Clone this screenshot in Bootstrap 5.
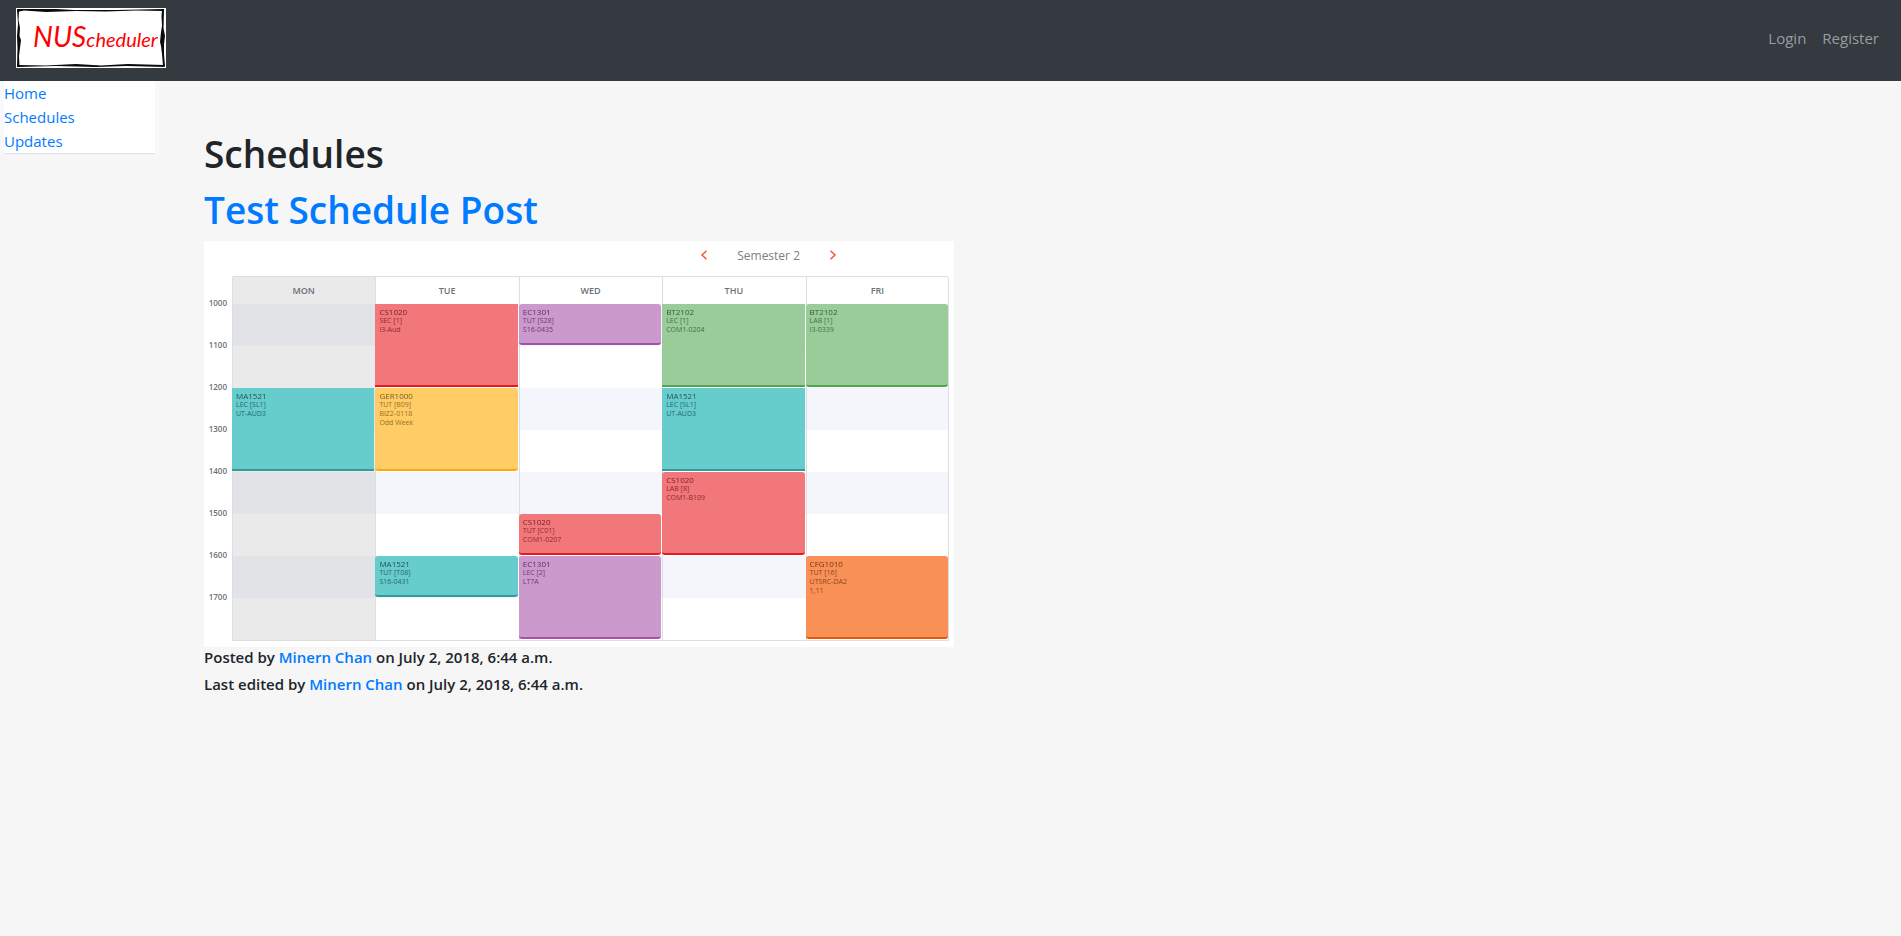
<!DOCTYPE html>
<html lang="en">
<head>
<meta charset="utf-8">
<meta name="viewport" content="width=device-width, initial-scale=1">
<title>NUScheduler</title>
<link href="https://cdn.jsdelivr.net/npm/bootstrap@5.3.0/dist/css/bootstrap.min.css" rel="stylesheet">
<style>
  body { font-family: "Open Sans", "Noto Sans", sans-serif; font-size: 15px; line-height: 24px; background: #f6f6f6; color: #212529; }
  a { color: #007bff; text-decoration: none; }
  a:hover { text-decoration: underline; }
  .site-nav { background: #343a40; padding: 8px 14px 8px 16px; min-height: 81px; align-items: flex-start; }
  .site-nav .navbar-brand { padding: 0; margin: 0; line-height: 0; }
  .site-nav .nav-link { color: #999c9f; padding: 18px 8px 8px; line-height: 24px; }
  .side-wrap { width: 159px; padding: 0 4px; background: #f8f9fa; }
  .side-menu { background: #fff; border-bottom: 1px solid #dee2e6; }
  .page-body { padding: 49px 16px 24px 45px; }
  .page-title { font-size: 37px; line-height: 48px; font-weight: 600; margin: 0 0 8px; }
  .page-title.linked { margin-bottom: 7px; }
  .byline { font-size: 15px; line-height: 19px; font-weight: 600; margin: 0 0 8px; }

  .planner { max-width: 750px; background: #fff; padding: 0 5px 6px 0; margin-bottom: 1px; color: #69707a; }
  .semester { height: 35px; padding: 3px 111px 0 0; font-size: 12px; color: #808080; gap: 28px; }
  .semester button { border: 0; background: none; padding: 0; width: 10px; height: 21px; line-height: 0; }
  .week { display: grid; grid-template-columns: 28px repeat(5, minmax(0, 1fr)); grid-template-rows: 28px repeat(8, 42px) 1px; }
  .day-bg { grid-row: 1 / 11; border: solid #dcdee2; border-width: 1px 0 1px 1px;
    background: linear-gradient(#fff, #fff) top / 100% 27px no-repeat,
      repeating-linear-gradient(#f5f6fb 0 42px, #fff 42px 84px) 0 27px; }
  .day-bg.today { background: linear-gradient(#eaeaea, #eaeaea) top / 100% 27px no-repeat,
      repeating-linear-gradient(#e2e3e7 0 42px, #eaeaea 42px 84px) 0 27px; border-top-left-radius: 2px; }
  .day-bg.last { border-right-width: 1px; border-top-right-radius: 2px; }
  .day-name { grid-row: 1; font-size: 9px; font-weight: 600; line-height: 30px; text-align: center; }
  .hour { grid-column: 1; font-size: 8px; font-weight: 600; line-height: 10px; text-align: right; padding-right: 5px; margin-top: -6px; }
  .lesson { margin: 0 1px 1px 0; border-bottom: 2px solid; padding: 3px 4px; font-size: 7px; line-height: 9px; overflow: hidden; }
  .lesson b { display: block; font-size: 8px; font-weight: 400; filter: brightness(.8); }
  .soft { border-radius: 3px; }
  .red { background: #f2777a; border-color: #e8191d; color: #8f2a30; }
  .teal { background: #66cccc; border-color: #339999; color: #29696c; }
  .gold { background: #ffcc66; border-color: #ffa80d; color: #98712a; }
  .plum { background: #cc99cc; border-color: #a94fa9; color: #6f3c70; }
  .leaf { background: #99cc99; border-color: #51a651; color: #42723f; }
  .rust { background: #f99157; border-color: #e25608; color: #8c481d; }
  .d1 { grid-column: 2; } .d2 { grid-column: 3; } .d3 { grid-column: 4; } .d4 { grid-column: 5; } .d5 { grid-column: 6; }
  .h10 { grid-row-start: 2; } .h11 { grid-row-start: 3; } .h12 { grid-row-start: 4; } .h13 { grid-row-start: 5; }
  .h14 { grid-row-start: 6; } .h15 { grid-row-start: 7; } .h16 { grid-row-start: 8; } .h17 { grid-row-start: 9; }
  .long { grid-row-end: span 2; }
</style>
</head>
<body>
<nav class="navbar navbar-expand site-nav">
  <a class="navbar-brand" href="#">
    <svg width="150" height="60" viewBox="0 0 150 60" role="img" aria-label="NUScheduler">
      <rect width="150" height="60" fill="#fff"/>
      <g fill="#0a0a0a">
        <path d="M1 1L40 1 58 2 100 2 148 1 148 3 120 2.500 90 3.500 60 3 30 4 8 2.500 1 4Z"/>
        <path d="M1 57L30 57.500 60 56 85 57.500 112 56 148 57 149 59 110 58 80 59 40 58 1 59Z"/>
        <path d="M1 1L3 3 2.500 12 4 20 3.500 28 5 32 4 40 3 48 3.500 59 1 59 1.500 40 1 28 2 16Z"/>
        <path d="M146 2L148 2 147.500 20 149 28 148 36 148 46 149 58 147 58 146 46 145 38 144 34 145 24 146 18 145.500 8Z"/>
      </g>
      <text x="17" y="39" fill="#f00" font-family="Lato, sans-serif" font-style="italic"><tspan font-size="28">NUS</tspan><tspan font-size="20">cheduler</tspan></text>
    </svg>
  </a>
  <ul class="navbar-nav ms-auto">
    <li class="nav-item"><a class="nav-link" href="#">Login</a></li>
    <li class="nav-item"><a class="nav-link" href="#">Register</a></li>
  </ul>
</nav>
<div class="d-flex align-items-start">
  <aside class="side-wrap flex-shrink-0">
    <ul class="side-menu list-unstyled mb-0">
      <li><a href="#">Home</a></li>
      <li><a href="#">Schedules</a></li>
      <li><a href="#">Updates</a></li>
    </ul>
  </aside>
  <main class="page-body flex-grow-1">
    <h1 class="page-title">Schedules</h1>
    <article>
      <h1 class="page-title linked"><a href="#">Test Schedule Post</a></h1>
      <section class="planner" aria-label="Timetable">
        <div class="semester d-flex justify-content-end">
          <button type="button" aria-label="Previous semester"><svg width="8" height="10" viewBox="0 0 8 10" fill="none" stroke="#ff5138" stroke-width="1.5"><path d="M6.500.8L2 5l4.500 4.200"/></svg></button>
          <span>Semester 2</span>
          <button type="button" aria-label="Next semester"><svg width="8" height="10" viewBox="0 0 8 10" fill="none" stroke="#ff5138" stroke-width="1.5"><path d="M1.500.8L6 5 1.500 9.200"/></svg></button>
        </div>
        <div class="week">
          <div class="day-bg today d1"></div><div class="day-bg d2"></div><div class="day-bg d3"></div><div class="day-bg d4"></div><div class="day-bg last d5"></div>
          <div class="day-name d1">MON</div><div class="day-name d2">TUE</div><div class="day-name d3">WED</div><div class="day-name d4">THU</div><div class="day-name d5">FRI</div>
          <div class="hour h10">1000</div><div class="hour h11">1100</div><div class="hour h12">1200</div><div class="hour h13">1300</div>
          <div class="hour h14">1400</div><div class="hour h15">1500</div><div class="hour h16">1600</div><div class="hour h17">1700</div>
          <div class="lesson teal d1 h12 long"><b>MA1521</b>LEC [SL1]<br>UT-AUD3</div>
          <div class="lesson red d2 h10 long"><b>CS1020</b>SEC [1]<br>I3-Aud</div>
          <div class="lesson gold soft d2 h12 long"><b>GER1000</b>TUT [B09]<br>BIZ2-0118<br>Odd Week</div>
          <div class="lesson teal soft d2 h16"><b>MA1521</b>TUT [T08]<br>S16-0431</div>
          <div class="lesson plum soft d3 h10"><b>EC1301</b>TUT [S28]<br>S16-0435</div>
          <div class="lesson red soft d3 h15"><b>CS1020</b>TUT [C01]<br>COM1-0207</div>
          <div class="lesson plum soft d3 h16 long"><b>EC1301</b>LEC [2]<br>LT7A</div>
          <div class="lesson leaf d4 h10 long"><b>BT2102</b>LEC [1]<br>COM1-0204</div>
          <div class="lesson teal d4 h12 long"><b>MA1521</b>LEC [SL1]<br>UT-AUD3</div>
          <div class="lesson red soft d4 h14 long"><b>CS1020</b>LAB [8]<br>COM1-B109</div>
          <div class="lesson leaf soft d5 h10 long"><b>BT2102</b>LAB [1]<br>I3-0339</div>
          <div class="lesson rust soft d5 h16 long"><b>CFG1010</b>TUT [16]<br>UTSRC-DA2<br>1,11</div>
        </div>
      </section>
      <h6 class="byline">Posted by <a href="#">Minern Chan</a> on July 2, 2018, 6:44 a.m.</h6>
      <h6 class="byline">Last edited by <a href="#">Minern Chan</a> on July 2, 2018, 6:44 a.m.</h6>
    </article>
  </main>
</div>
<script src="https://cdn.jsdelivr.net/npm/bootstrap@5.3.0/dist/js/bootstrap.bundle.min.js"></script>
</body>
</html>
